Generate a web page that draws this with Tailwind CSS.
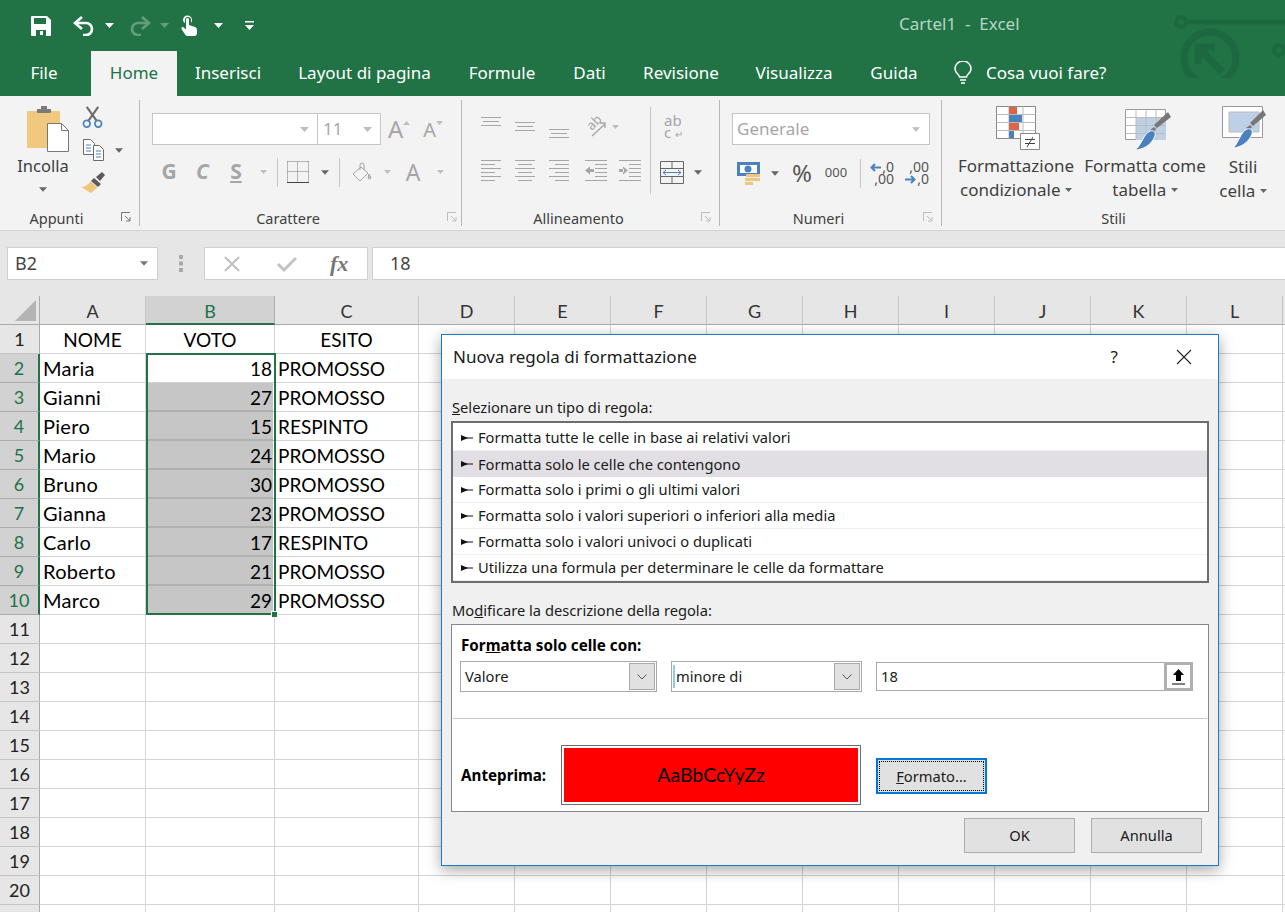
<!DOCTYPE html>
<html lang="it">
  <head>
    <meta charset="UTF-8" />
    <title>Cartel1 - Excel</title>
    <script src="https://cdn.jsdelivr.net/npm/@tailwindcss/browser@4"></script>
  </head>
  <body class="w-[1285px] h-[912px] overflow-hidden bg-white font-['Noto_Sans',sans-serif] text-[#444]">
    <!-- shared small shapes -->
    <svg class="hidden">
      <symbol id="caret" viewBox="0 0 9 5"><path d="M0 0h9L4.5 5z" fill="currentColor" /></symbol>
      <symbol id="launcher" viewBox="0 0 10 10"><path d="M.5 9V.5H9M4 4l5 5M9 5v4H5" fill="none" stroke="currentColor" /></symbol>
      <symbol id="al-top" viewBox="0 0 20 22"><path d="M0 .5h20M2 4.5h16M0 8.5h20" stroke="currentColor" /></symbol>
      <symbol id="al-mid" viewBox="0 0 20 22"><path d="M0 5.5h20M2 9.5h16M0 13.5h20" stroke="currentColor" /></symbol>
      <symbol id="al-bot" viewBox="0 0 20 22"><path d="M0 12.5h20M2 16.5h16M0 20.5h20" stroke="currentColor" /></symbol>
      <symbol id="al-left" viewBox="0 0 20 22"><path d="M0 .5h20M0 4.5h14M0 8.5h20M0 12.5h14M0 16.5h20M0 20.5h14" stroke="currentColor" /></symbol>
      <symbol id="al-center" viewBox="0 0 20 22"><path d="M0 .5h20M3 4.5h14M0 8.5h20M3 12.5h14M0 16.5h20M3 20.5h14" stroke="currentColor" /></symbol>
      <symbol id="al-right" viewBox="0 0 20 22"><path d="M0 .5h20M6 4.5h14M0 8.5h20M6 12.5h14M0 16.5h20M6 20.5h14" stroke="currentColor" /></symbol>
    </svg>

    <!-- title bar + tabs -->
    <header class="relative h-[96px] bg-[#217346] text-white overflow-hidden">
      <svg class="absolute left-[1170px] top-[10px] w-[115px] h-[68px] text-[#1c6840]" viewBox="0 0 115 68" fill="none" stroke="currentColor">
        <circle cx="11" cy="12" r="5" stroke-width="4" />
        <path d="M16 12h99" stroke-width="5" />
        <circle cx="109" cy="40" r="5" stroke-width="4" />
        <circle cx="40" cy="48" r="26" stroke-width="7" />
        <path d="M52 62L31 40M28 54V37h17" stroke-width="7" />
      </svg>

      <div class="flex items-center h-[51px] relative">
        <svg class="ml-[31px] w-[20px] h-[20px]" viewBox="0 0 20 20"><path d="M1 0h15l4 4v15a1 1 0 0 1-1 1H1a1 1 0 0 1-1-1V1a1 1 0 0 1 1-1z" fill="#fff" /><path d="M3 2h12v6H3z" fill="#217346" /><path d="M5 14h10v6H5z" fill="#217346" /><path d="M9 15h3v4H9z" fill="#fff" /></svg>
        <svg class="ml-[22px] w-[22px] h-[20px]" viewBox="0 0 22 20" fill="none" stroke="#fff" stroke-width="2.6"><path d="M9 1L2 7l7 6" /><path d="M3 7h10a6 6 0 0 1 0 12h-3" /></svg>
        <svg class="ml-[10px] w-[9px] h-[5px]"><use href="#caret" /></svg>
        <svg class="ml-[15px] w-[22px] h-[20px] opacity-30" viewBox="0 0 22 20" fill="none" stroke="#fff" stroke-width="2.6"><path d="M13 1l7 6-7 6" /><path d="M19 7H9a6 6 0 0 0 0 12h3" /></svg>
        <svg class="ml-[9px] w-[9px] h-[5px] opacity-30"><use href="#caret" /></svg>
        <svg class="ml-[11px] w-[17px] h-[21px]" viewBox="0 0 17 21" fill="#fff"><path d="M6 4.5a1.5 1.5 0 0 1 3 0V10l6 2c1.500 .5 2 1.500 2 3v3a3 3 0 0 1-3 3H8c-1.500 0-2.500-.6-3.200-2L1.500 14c-.6-1.500 1-2.500 2.200-1.500L6 14.500z" /><path d="M3 5a4.500 4.500 0 1 1 9 0c0 1.300-.5 2.300-1 3V5a3 3 0 0 0-6 0v3c-1-.7-2-1.700-2-3z" /></svg>
        <svg class="ml-[17px] w-[9px] h-[5px]"><use href="#caret" /></svg>
        <svg class="ml-[22px] w-[9px] h-[9px]" viewBox="0 0 9 9" fill="#fff"><path d="M0 0h9v1.500H0zM0 4h9L4.500 9z" /></svg>
        <span class="absolute left-[899px] top-[14px] text-[17px] leading-[20px] text-[#b5d5c4] whitespace-pre">Cartel1  -  Excel</span>
      </div>

      <nav class="flex h-[45px] relative text-[17px] leading-[43px]">
        <div class="w-[91px] pr-[3px] text-center">File</div>
        <div class="w-[86px] text-center bg-[#f3f3f3] text-[#217346]">Home</div>
        <div class="w-[102px] text-center">Inserisci</div>
        <div class="w-[171px] text-center">Layout di pagina</div>
        <div class="w-[104px] text-center">Formule</div>
        <div class="w-[71px] text-center">Dati</div>
        <div class="w-[112px] text-center">Revisione</div>
        <div class="w-[114px] text-center">Visualizza</div>
        <div class="w-[86px] text-center">Guida</div>
        <div class="flex items-center h-[43px] ml-[17px]">
          <svg class="w-[18px] h-[24px]" viewBox="0 0 18 24" fill="none" stroke="#fff" stroke-width="1.500"><path d="M5.500 16C5 13 1 12 1 8a8 8 0 0 1 16 0c0 4-4 5-4.500 8z" /><path d="M6 19h6M7 22h4" /></svg>
          <span class="ml-[14px]">Cosa vuoi fare?</span>
        </div>
      </nav>
    </header>

    <!-- ribbon -->
    <section class="flex h-[135px] bg-[#f3f3f3] border-b border-[#d2d2d2] pt-[4px] text-[#3f3f3f]">
      <!-- Appunti -->
      <div class="w-[140px] h-[126px] border-r border-[#b8b8b8] flex flex-col">
        <div class="flex h-[108px] pl-[18px]">
          <div class="w-[50px] flex flex-col items-center">
            <svg class="mt-[6px] ml-[9px] w-[42px] h-[46px]" viewBox="0 0 42 46">
              <rect x="0" y="5" width="33" height="37" rx="1" fill="#f0c97f" />
              <path d="M10 6V3h4V0h6v3h4v3a1 1 0 0 1-1 1H11a1 1 0 0 1-1-1z" fill="#7a7a7a" />
              <path d="M20.500 17.500h14l7 7v21h-21z" fill="#fff" stroke="#777" />
              <path d="M34.500 17.500v7h7" fill="none" stroke="#777" />
            </svg>
            <span class="text-[16.500px] leading-[24px] mt-[2px]">Incolla</span>
            <svg class="mt-[9px] w-[8px] h-[5px] text-[#666]"><use href="#caret" /></svg>
          </div>
          <div class="ml-[12px] flex flex-col">
            <svg class="mt-[6px] ml-[2px] w-[21px] h-[22px]" viewBox="0 0 22 23" fill="none"><path d="M5 1l10 14M17 1L7 15" stroke="#6b6b6b" stroke-width="2.200" /><circle cx="5" cy="18.500" r="3.500" stroke="#4b82bd" stroke-width="1.800" /><circle cx="17" cy="18.500" r="3.500" stroke="#4b82bd" stroke-width="1.800" /></svg>
            <div class="mt-[11px] ml-[3px] flex items-center">
              <svg class="w-[21px] h-[22px]" viewBox="0 0 21 22" fill="#fff" stroke="#6b6b6b"><path d="M.5.500h7l4 4v11H.5z" /><path d="M10.500 6.500h6l4 4v11h-10z" /><path d="M3 6h5M3 9h5M3 12h5M13 12h5M13 15h5M13 18h5" stroke="#4b82bd" /></svg>
              <svg class="ml-[11px] w-[8px] h-[5px] text-[#666]"><use href="#caret" /></svg>
            </div>
            <svg class="mt-[11px] ml-[1px] w-[24px] h-[21px]" viewBox="0 0 24 21"><path d="M15 5l6-5 3 3-5 6z" fill="#5a5a5a" /><path d="M13 6l7 6-3 3-7-6z" fill="#5a5a5a" /><path d="M9.500 9.500l7 6L10 21 0 15c4 0 7-2 9.500-5.500z" fill="#eec67d" /></svg>
          </div>
        </div>
        <div class="relative h-[18px] text-center text-[14.500px] leading-[20px] pr-[26px]">Appunti
          <svg class="absolute right-[8px] top-[4px] w-[10px] h-[10px] text-[#777]"><use href="#launcher" /></svg>
        </div>
      </div>

      <!-- Carattere -->
      <div class="w-[322px] h-[126px] border-r border-[#b8b8b8] flex flex-col">
        <div class="h-[108px] pl-[12px] pt-[13px]">
          <div class="flex h-[32px] items-center">
            <div class="w-[166px] h-[32px] bg-white border border-[#c6c6c6] flex items-center justify-end pr-[8px]">
              <svg class="w-[9px] h-[5px] text-[#bdbdbd]"><use href="#caret" /></svg>
            </div>
            <div class="-ml-[1px] w-[64px] h-[32px] bg-white border border-[#c6c6c6] flex items-center pl-[5px] pr-[8px] justify-between text-[#a6a6a6] text-[17px]">
              11
              <svg class="w-[9px] h-[5px] text-[#bdbdbd]"><use href="#caret" /></svg>
            </div>
            <span class="ml-[7px] text-[#a6a6a6] text-[24px] leading-[32px]">A</span>
            <svg class="mb-[13px] w-[7px] h-[4px] text-[#bdbdbd] rotate-180"><use href="#caret" /></svg>
            <span class="ml-[13px] text-[#a6a6a6] text-[20px] leading-[32px] pt-[2px]">A</span>
            <svg class="mb-[13px] w-[7px] h-[4px] text-[#bdbdbd]"><use href="#caret" /></svg>
          </div>
          <div class="flex h-[32px] mt-[11px] items-center text-[#a6a6a6] text-[21px] font-bold">
            <span class="w-[34px] text-center">G</span>
            <span class="w-[33px] text-center italic">C</span>
            <span class="w-[34px] text-center underline">S</span>
            <div class="w-[20px] flex justify-center"><svg class="w-[7px] h-[4px] text-[#bdbdbd]"><use href="#caret" /></svg></div>
            <div class="w-[8px] flex justify-center"><div class="w-px h-[29px] bg-[#c6c6c6]"></div></div>
            <div class="w-[34px] flex justify-center">
              <svg class="w-[22px] h-[22px]" viewBox="0 0 22 22" fill="none" stroke="#777"><path d="M.5.500h21M.5 10.500h21M.5.500v21M10.500.500v21M21.500.500v21" stroke-dasharray="1 1" /><path d="M0 21.500h22" stroke="#444" /></svg>
            </div>
            <div class="w-[20px] flex justify-center"><svg class="w-[8px] h-[5px] text-[#666]"><use href="#caret" /></svg></div>
            <div class="w-[8px] flex justify-center"><div class="w-px h-[29px] bg-[#c6c6c6]"></div></div>
            <div class="w-[38px] flex justify-center">
              <svg class="w-[20px] h-[20px]" viewBox="0 0 20 20" fill="none" stroke="#a6a6a6"><path d="M9 5L1 12l7 7 8-8z" /><path d="M8 8V3a2 2 0 0 1 4 0v5" /><path d="M17 12l2 4a2 2 0 0 1-3 0z" fill="#c6c6c6" /></svg>
            </div>
            <div class="w-[12px] flex justify-center"><svg class="w-[7px] h-[4px] text-[#bdbdbd]"><use href="#caret" /></svg></div>
            <span class="w-[40px] text-center text-[23px] font-normal">A</span>
            <div class="w-[14px] flex justify-center"><svg class="w-[7px] h-[4px] text-[#bdbdbd]"><use href="#caret" /></svg></div>
          </div>
        </div>
        <div class="relative h-[18px] text-center text-[14.500px] leading-[20px] pr-[25px]">Carattere
          <svg class="absolute right-[4px] top-[4px] w-[10px] h-[10px] text-[#bdbdbd]"><use href="#launcher" /></svg>
        </div>
      </div>

      <!-- Allineamento -->
      <div class="w-[258px] h-[126px] border-r border-[#b8b8b8] flex flex-col">
        <div class="h-[108px] flex">
          <div class="w-[189px] border-r border-[#c6c6c6] mt-[7px] h-[87px] pl-[19px] text-[#a6a6a6]">
            <div class="flex items-start mt-[10px] h-[22px]">
              <svg class="w-[20px] h-[22px]"><use href="#al-top" /></svg>
              <svg class="ml-[14px] w-[20px] h-[22px]"><use href="#al-mid" /></svg>
              <svg class="ml-[14px] w-[20px] h-[22px]"><use href="#al-bot" /></svg>
              <div class="relative ml-[16px] w-[22px] h-[20px]">
                <span class="absolute left-[1px] top-[-3px] -rotate-45 text-[13px] leading-[16px]">ab</span>
                <svg class="absolute left-0 top-0 w-[22px] h-[20px]" viewBox="0 0 22 20" fill="none" stroke="#a6a6a6" stroke-width="1.300"><path d="M7 19L20 7M15 6h5v5" /></svg>
              </div>
              <svg class="ml-[5px] mt-[8px] w-[7px] h-[4px] text-[#bdbdbd]"><use href="#caret" /></svg>
            </div>
            <div class="flex items-start mt-[21px] h-[22px]">
              <svg class="w-[20px] h-[22px]"><use href="#al-left" /></svg>
              <svg class="ml-[14px] w-[20px] h-[22px]"><use href="#al-center" /></svg>
              <svg class="ml-[14px] w-[20px] h-[22px]"><use href="#al-right" /></svg>
              <svg class="ml-[16px] w-[22px] h-[22px]" viewBox="0 0 22 22" fill="none" stroke="currentColor"><path d="M0 .5h22M10 4.500h12M10 8.500h12M10 12.500h12M10 16.500h12M0 20.500h22" /><path d="M0 10.500l5-4v8zM4 9h5v3H4z" fill="currentColor" stroke="none" /></svg>
              <svg class="ml-[12px] w-[22px] h-[22px]" viewBox="0 0 22 22" fill="none" stroke="currentColor"><path d="M0 .5h22M10 4.500h12M10 8.500h12M10 12.500h12M10 16.500h12M0 20.500h22" /><path d="M9 10.500l-5-4v8zM0 9h5v3H0z" fill="currentColor" stroke="none" /></svg>
            </div>
          </div>
          <div class="pl-[9px] mt-[7px]">
            <div class="w-[24px] ml-[4px] mt-[7px] flex flex-col text-[#a6a6a6] text-[15px] leading-[12px]">
              <span>ab</span>
              <span class="whitespace-nowrap">c <span class="text-[10px]">↵</span></span>
            </div>
            <div class="flex items-center mt-[21px]">
              <svg class="w-[24px] h-[23px]" viewBox="0 0 24 23" fill="none" stroke="#666"><path d="M.5.500h23v22H.5zM.5 7.500h23M.5 15.500h23M12 .5v7M12 15.500v7" /><path d="M3 11.500h18M3 11.500l3-2.500M3 11.500l3 2.500M21 11.500l-3-2.500M21 11.500l-3 2.500" stroke="#4b82bd" /></svg>
              <svg class="ml-[10px] w-[8px] h-[5px] text-[#666]"><use href="#caret" /></svg>
            </div>
          </div>
        </div>
        <div class="relative h-[18px] text-center text-[14.500px] leading-[20px] pr-[24px]">Allineamento
          <svg class="absolute right-[8px] top-[4px] w-[10px] h-[10px] text-[#bdbdbd]"><use href="#launcher" /></svg>
        </div>
      </div>

      <!-- Numeri -->
      <div class="w-[222px] h-[126px] border-r border-[#b8b8b8] flex flex-col">
        <div class="h-[108px] pl-[12px] pt-[13px]">
          <div class="w-[198px] h-[32px] bg-white border border-[#c6c6c6] flex items-center justify-between pl-[4px] pr-[9px] text-[#a6a6a6] text-[17px]">
            Generale
            <svg class="w-[8px] h-[5px] text-[#bdbdbd]"><use href="#caret" /></svg>
          </div>
          <div class="flex items-center h-[30px] mt-[13px] pl-[5px]">
            <svg class="w-[24px] h-[23px]" viewBox="0 0 24 23"><path d="M0 0h23v14H0z" fill="#4b82bd" /><path d="M3 3h17v8H3z" fill="#fff" /><circle cx="11" cy="7" r="3.500" fill="#4b82bd" /><path d="M9 12h14v3H9zM15 16h8v3h-8zM8 16h7v3H8zM8 20h8v3H8z" fill="#eec67d" /></svg>
            <svg class="ml-[10px] w-[8px] h-[5px] text-[#666]"><use href="#caret" /></svg>
            <span class="ml-[5px] w-[36px] text-center text-[24px] leading-[30px] text-[#555]">%</span>
            <span class="w-[32px] text-center text-[13px] text-[#555]">000</span>
            <div class="ml-[8px] w-px h-[29px] bg-[#c6c6c6]"></div>
            <div class="ml-[9px] w-[24px] text-[14px] leading-[12px] text-right text-[#555]">
              <div class="flex justify-end items-center h-[12px]"><svg class="w-[11px] h-[9px] mr-[1px]" viewBox="0 0 11 9" fill="none" stroke="#4b82bd" stroke-width="2"><path d="M5 1L1.500 4.500 5 8M2 4.500h9" /></svg>,0</div>
              <div class="h-[12px]">,00</div>
            </div>
            <div class="ml-[11px] w-[24px] text-[14px] leading-[12px] text-right text-[#555]">
              <div class="h-[12px]">,00</div>
              <div class="flex justify-end items-center h-[12px]"><svg class="w-[11px] h-[9px] mr-[1px]" viewBox="0 0 11 9" fill="none" stroke="#4b82bd" stroke-width="2"><path d="M6 1l3.500 3.500L6 8M9 4.500H0" /></svg>,0</div>
            </div>
          </div>
        </div>
        <div class="relative h-[18px] text-center text-[14.500px] leading-[20px] pr-[24px]">Numeri
          <svg class="absolute right-[8px] top-[4px] w-[10px] h-[10px] text-[#bdbdbd]"><use href="#launcher" /></svg>
        </div>
      </div>

      <!-- Stili -->
      <div class="flex-1 h-[126px] flex flex-col">
        <div class="h-[108px] flex pl-[12px] text-[17px] leading-[24px] text-center">
          <div class="w-[124px] flex flex-col items-center">
            <svg class="mt-[6px] ml-[4px] w-[45px] h-[44px]" viewBox="0 0 45 44">
              <path d="M.5.500h39v32H.5z" fill="#fff" stroke="#888" />
              <path d="M13 .5v32M27 .5v32M.5 8.500h39M.5 16.500h39M.5 24.500h39" stroke="#bbb" fill="none" />
              <path d="M13 1h8v7h-8zM13 17h10v7H13z" fill="#dd6647" />
              <path d="M13 9h13v7H13zM13 25h5v7h-5z" fill="#4b82bd" />
              <path d="M24.500 27.500h19v16h-19z" fill="#fff" stroke="#888" />
              <path d="M29 33.500h10M29 37.500h10M31 41l6-10" stroke="#444" fill="none" />
            </svg>
            <span class="mt-[4px]">Formattazione</span>
            <span>condizionale <svg class="inline w-[7px] h-[4px] mb-[3px] text-[#666]"><use href="#caret" /></svg></span>
          </div>
          <div class="w-[134px] flex flex-col items-center">
            <svg class="mt-[9px] ml-[5px] w-[46px] h-[41px]" viewBox="0 0 46 41">
              <path d="M.5.500h40v30H.5z" fill="#fff" stroke="#999" />
              <path d="M11 9h30v22H11z" fill="#bed0e5" />
              <path d="M.5 8.500h40M.5 16.500h40M.5 24.500h40M11 .5v30M21 .5v30M31 .5v30" stroke="#bbb" fill="none" />
              <path d="M46 8L32 19l-3-3 14-13zM31 20l-3 4-3-3 4-3z" fill="#777" />
              <path d="M25 22c4-1 6 1 5 5-3 9-13 14-20 14 6-4 9-17 15-19z" fill="#4b82bd" stroke="#fff" />
            </svg>
            <span class="mt-[4px]">Formatta come</span>
            <span>tabella <svg class="inline w-[7px] h-[4px] mb-[3px] text-[#666]"><use href="#caret" /></svg></span>
          </div>
          <div class="w-[62px] flex flex-col items-center">
            <svg class="mt-[6px] ml-[2px] w-[44px] h-[42px]" viewBox="0 0 44 42">
              <path d="M.5.500h40v31H.5z" fill="#fff" stroke="#999" />
              <path d="M7 6h30v20H7z" fill="#bed0e5" stroke="#bbb" />
              <path d="M44 9L31 20l-3-3 13-13zM30 21l-3 4-3-3 4-3z" fill="#777" />
              <path d="M25 23c4-1 6 1 5 5-3 9-13 14-19 14 5-4 8-17 14-19z" fill="#4b82bd" stroke="#fff" />
            </svg>
            <span class="mt-[7px]">Stili</span>
            <span>cella <svg class="inline w-[7px] h-[4px] mb-[3px] text-[#666]"><use href="#caret" /></svg></span>
          </div>
        </div>
        <div class="h-[18px] text-center text-[14.500px] leading-[20px]">Stili</div>
      </div>
    </section>

    <!-- formula bar -->
    <section class="flex items-start h-[65px] bg-[#e6e6e6] pt-[16px] pl-[7px]">
      <div class="w-[151px] h-[33px] bg-white border border-[#d0d0d0] flex items-center justify-between pl-[7px] pr-[9px] text-[18px]">
        B2
        <svg class="w-[8px] h-[5px] text-[#777]"><use href="#caret" /></svg>
      </div>
      <svg class="ml-[21px] w-[4px] h-[17px] mt-[8px] text-[#aaa]" viewBox="0 0 4 17" fill="currentColor"><path d="M0 0h4v4H0zM0 6.500h4v4H0zM0 13h4v4H0z" /></svg>
      <div class="ml-[21px] w-[164px] h-[33px] bg-white border border-[#d0d0d0] flex items-center">
        <svg class="ml-[18px] w-[18px] h-[16px]" viewBox="0 0 18 16" fill="none" stroke="#c4c4c4" stroke-width="2.400"><path d="M2 1l14 14M16 1L2 15" /></svg>
        <svg class="ml-[36px] w-[20px] h-[16px]" viewBox="0 0 20 16" fill="none" stroke="#c4c4c4" stroke-width="3"><path d="M1 8l6 6L19 2" /></svg>
        <span class="ml-[33px] text-[#777] text-[22px] italic font-bold font-['Liberation_Serif',serif]">fx</span>
      </div>
      <div class="ml-[4px] flex-1 h-[33px] bg-white border-y border-l border-[#d0d0d0] pl-[17px] text-[18px] leading-[31px]">18</div>
    </section>

    <!-- sheet -->
    <main class="relative h-[616px] overflow-hidden font-['Lato',sans-serif] text-[19px] text-black">
      <div id="sheet" class="grid grid-cols-[40px_106px_129px_144px_repeat(10,96px)] auto-rows-[29px]"></div>
      <!-- selection outline -->
      <div class="absolute left-[146px] top-[57px] w-[130px] h-[262px] border-2 border-[#217346] pointer-events-none"></div>
      <div class="absolute left-[271px] top-[315px] w-[7px] h-[7px] bg-[#217346] border border-white pointer-events-none"></div>

      <!-- dialog -->
      <div class="absolute left-[441px] top-[38px] w-[778px] h-[532px] border border-[#1979ca] bg-[#f0f0f0] shadow-[0_4px_14px_rgba(0,0,0,0.35)] flex flex-col font-['Noto_Sans',sans-serif] text-[14.700px] text-[#1a1a1a]">
        <div class="h-[44px] shrink-0 bg-white flex items-center pl-[11px]">
          <span class="text-[17px]">Nuova regola di formattazione</span>
          <span class="ml-auto text-[17px]">?</span>
          <svg class="ml-[58px] mr-[26px] w-[16px] h-[16px]" viewBox="0 0 16 16" stroke="#222" stroke-width="1.100"><path d="M1 1l14 14M15 1L1 15" /></svg>
        </div>
        <div class="px-[9px]">
          <div class="mt-[18px] h-[20px] leading-[20px] pl-[1px]"><span class="underline">S</span>elezionare un tipo di regola:</div>
          <ul id="rule-list" class="mt-[4px] h-[162px] border-2 border-[#6d6d6d] bg-white p-[2px_0px]"></ul>
          <div class="mt-[17px] h-[20px] leading-[20px] pl-[1px]">Mo<span class="underline">d</span>ificare la descrizione della regola:</div>
          <div class="mt-[4px] h-[188px] border border-[#828790] bg-white">
            <div class="mt-[10px] pl-[9px] h-[20px] leading-[20px] text-[15.200px] font-bold text-black">For<span class="underline">m</span>atta solo celle con:</div>
            <div class="mt-[6px] ml-[8px] flex items-center h-[31px]">
              <div class="w-[197px] h-[31px] border border-[#aaa] flex items-center justify-between pl-[4px] pr-[1px]">
                Valore
                <div class="w-[26px] h-[27px] bg-[#e1e1e1] border border-[#aaa] flex items-center justify-center">
                  <svg class="w-[10px] h-[6px]" viewBox="0 0 10 6" fill="none" stroke="#555"><path d="M.5.500L5 5 9.500.5" /></svg>
                </div>
              </div>
              <div class="ml-[14px] w-[191px] h-[31px] border border-[#aaa] flex items-center justify-between pr-[1px]">
                <span class="flex items-center h-full"><span class="ml-[1px] mr-[1px] w-[2px] h-[23px] bg-[#90c8f6]"></span>minore di</span>
                <div class="w-[26px] h-[27px] bg-[#e1e1e1] border border-[#aaa] flex items-center justify-center">
                  <svg class="w-[10px] h-[6px]" viewBox="0 0 10 6" fill="none" stroke="#555"><path d="M.5.500L5 5 9.500.5" /></svg>
                </div>
              </div>
              <div class="ml-[14px] w-[317px] h-[29px] border border-[#aaa] flex items-center justify-between pl-[4px]">
                18
                <div class="w-[29px] h-[29px] -mr-px bg-white border-[3px] border-[#b0b0b0] flex items-center justify-center">
                  <svg class="w-[13px] h-[16px]" viewBox="0 0 13 16"><path d="M6.500 0L12 6H9v6H4V6H1z" fill="#000" /><path d="M0 15h13" stroke="#000" /></svg>
                </div>
              </div>
            </div>
            <div class="mt-[26px] mx-px h-px bg-[#c8c8c8]"></div>
            <div class="mt-[26px] flex items-center h-[60px]">
              <div class="w-[109px] pl-[9px] text-[15.200px] font-bold text-black">Anteprima:</div>
              <div class="w-[300px] h-[60px] border border-[#6d6d6d] p-[2px]">
                <div class="h-full bg-[#ff0000] flex items-center justify-center font-['Lato',sans-serif] text-[19.500px] text-black">AaBbCcYyZz</div>
              </div>
              <div class="ml-[15px] w-[111px] h-[36px] border-2 border-[#0078d7] bg-[#e1e1e1] mt-[2px] p-px">
                <div class="h-full border border-dotted border-black flex items-center justify-center"><span><span class="underline">F</span>ormato...</span></div>
              </div>
            </div>
          </div>
          <div class="mt-[6px] pr-[7px] flex justify-end gap-[16px]">
            <div class="w-[111px] h-[35px] bg-[#e1e1e1] border border-[#adadad] flex items-center justify-center">OK</div>
            <div class="w-[111px] h-[35px] bg-[#e1e1e1] border border-[#adadad] flex items-center justify-center">Annulla</div>
          </div>
        </div>
      </div>
    </main>

    <script>
      const sheet = document.getElementById("sheet");
      const letters = ["A", "B", "C", "D", "E", "F", "G", "H", "I", "J", "K", "L", ""];
      const data = [
        ["NOME", "VOTO", "ESITO"],
        ["Maria", 18, "PROMOSSO"],
        ["Gianni", 27, "PROMOSSO"],
        ["Piero", 15, "RESPINTO"],
        ["Mario", 24, "PROMOSSO"],
        ["Bruno", 30, "PROMOSSO"],
        ["Gianna", 23, "PROMOSSO"],
        ["Carlo", 17, "RESPINTO"],
        ["Roberto", 21, "PROMOSSO"],
        ["Marco", 29, "PROMOSSO"],
      ];

      let html = `<div class="relative bg-[#e6e6e6] border-r border-b border-[#ababab]"><svg class="absolute left-[15px] top-[4px] w-[21px] h-[21px]" viewBox="0 0 21 21"><path d="M21 0v21H0z" fill="#b4b4b4" /></svg></div>`;
      letters.forEach((l) => {
        if (l === "B") {
          html += `<div class="bg-[#d2d2d2] border-r border-b-2 border-r-[#ababab] border-b-[#217346] text-center text-[#217346] text-[18px] leading-[30px]">${l}</div>`;
        } else {
          html += `<div class="bg-[#e6e6e6] border-r border-b border-r-[#c6c6c6] border-b-[#ababab] text-center text-[#333] text-[18px] leading-[30px]">${l}</div>`;
        }
      });

      for (let r = 1; r <= 21; r++) {
        const row = data[r - 1] || [];
        const picked = r >= 2 && r <= 10;
        // row 21 only shows its top edge, the number falls below the window
        const label = r < 21 ? r : "";
        html += picked
          ? `<div class="bg-[#d2d2d2] border-r-2 border-b border-r-[#217346] border-b-[#ababab] text-center text-[#217346] text-[18px] leading-[29px]">${label}</div>`
          : `<div class="bg-[#e6e6e6] border-r border-b border-r-[#ababab] border-b-[#c6c6c6] text-center text-[#222] text-[18px] leading-[29px]">${label}</div>`;
        letters.forEach((l, i) => {
          const value = row[i] ?? "";
          if (r === 1) {
            html += `<div class="border-r border-b border-[#d4d4d4] text-center leading-[29px] overflow-hidden">${value}</div>`;
          } else if (i === 0) {
            html += `<div class="border-r border-b border-[#d4d4d4] pl-[3px] text-[20px] tracking-[0.3px] leading-[29px] whitespace-nowrap">${value}</div>`;
          } else if (i === 1 && picked) {
            const fill = r === 2 ? "" : "bg-[#c6c6c6] border-b border-b-[#b0b0b0]";
            html += `<div class="border-r border-b border-[#d4d4d4] ${r === 2 ? "" : "border-b-[#b0b0b0]"}"><div class="h-full ml-[2px] mr-[1px] ${fill} text-right pr-[1px] leading-[29px]">${value}</div></div>`;
          } else {
            html += `<div class="border-r border-b border-[#d4d4d4] pl-[3px] leading-[29px] whitespace-nowrap">${value}</div>`;
          }
        });
      }
      sheet.innerHTML = html;

      const rules = [
        "Formatta tutte le celle in base ai relativi valori",
        "Formatta solo le celle che contengono",
        "Formatta solo i primi o gli ultimi valori",
        "Formatta solo i valori superiori o inferiori alla media",
        "Formatta solo i valori univoci o duplicati",
        "Utilizza una formula per determinare le celle da formattare",
      ];
      document.getElementById("rule-list").innerHTML = rules
        .map((text, i) => {
          const state = i === 1 ? "bg-[#e1dfe3]" : "border-b border-[#f0f0f0]";
          return `<li class="h-[26px] flex items-center pl-[8px] ${state}">
            <svg class="w-[12px] h-[6px] mr-[5px]" viewBox="0 0 12 6"><path d="M0 0l7 3-7 3z" fill="#111" /><path d="M5 2.500h7v1H5z" fill="#111" /></svg>${text}</li>`;
        })
        .join("");
    </script>
  </body>
</html>
